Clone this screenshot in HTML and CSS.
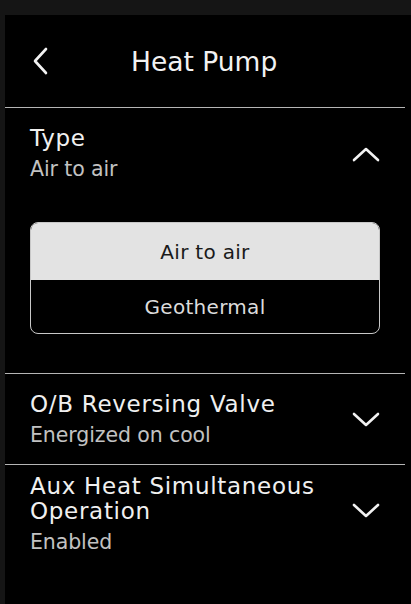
FILE: index.html
```html
<!DOCTYPE html>
<html>
<head>
<meta charset="utf-8">
<link rel="stylesheet" href="styles.css">
</head>
<body>
<div class="screen">
  <header class="header">
    <svg class="back" width="16" height="28" viewBox="0 0 16 28"><path d="M14 2 L3 14 L14 26" fill="none" stroke="#f2f2f2" stroke-width="2.6" stroke-linecap="round" stroke-linejoin="round"/></svg>
    <h1 class="title">Heat Pump</h1>
  </header>
  <div class="divider"></div>
  <section class="item item-open">
    <div class="row">
      <div class="texts">
        <div class="label">Type</div>
        <div class="value">Air to air</div>
      </div>
      <svg class="chev" width="28" height="16" viewBox="0 0 28 16"><path d="M2 14 L14 3 L26 14" fill="none" stroke="#f2f2f2" stroke-width="2.6" stroke-linecap="round" stroke-linejoin="round"/></svg>
    </div>
    <div class="options">
      <div class="option selected">Air to air</div>
      <div class="option">Geothermal</div>
    </div>
  </section>
  <div class="divider"></div>
  <section class="item item-ob">
    <div class="row">
      <div class="texts">
        <div class="label">O/B Reversing Valve</div>
        <div class="value">Energized on cool</div>
      </div>
      <svg class="chev" width="28" height="16" viewBox="0 0 28 16"><path d="M2 2 L14 13 L26 2" fill="none" stroke="#f2f2f2" stroke-width="2.6" stroke-linecap="round" stroke-linejoin="round"/></svg>
    </div>
  </section>
  <div class="divider"></div>
  <section class="item item-aux">
    <div class="row">
      <div class="texts">
        <div class="label">Aux Heat Simultaneous<br>Operation</div>
        <div class="value">Enabled</div>
      </div>
      <svg class="chev" width="28" height="16" viewBox="0 0 28 16"><path d="M2 2 L14 13 L26 2" fill="none" stroke="#f2f2f2" stroke-width="2.6" stroke-linecap="round" stroke-linejoin="round"/></svg>
    </div>
  </section>
</div>
</body>
</html>
```
FILE: styles.css
```css
html, body {
  margin: 0;
  padding: 0;
  background: #151515;
}
body {
  width: 411px;
  height: 604px;
  overflow: hidden;
  font-family: "DejaVu Sans", "Noto Sans", sans-serif;
}
.screen {
  margin: 15px 0 0 5px;
  height: 589px;
  background: #000;
  color: #f0f0f0;
}
.header {
  height: 92px;
  display: flex;
  align-items: center;
  padding-left: 27px;
}
.back {
  display: block;
}
.title {
  margin: 0 0 0 83px;
  font-size: 26.5px;
  font-weight: 400;
  color: #f2f2f2;
  letter-spacing: 0;
}
.divider {
  height: 1px;
  background: #b5b5b5;
  margin-right: 6px;
}
.item {
  padding: 0 0 0 25px;
}
.row {
  display: flex;
  align-items: center;
  justify-content: space-between;
  padding-right: 31px;
}
.label {
  font-size: 23px;
  line-height: 25px;
  color: #f0f0f0;
  letter-spacing: 0.7px;
}
.value {
  margin-top: 5px;
  font-size: 20.5px;
  line-height: 26px;
  color: #c2c2c2;
  letter-spacing: -0.1px;
}
.chev {
  display: block;
}
.item-open .row {
  padding-top: 18px;
}
.options {
  margin: 40px 31px 39px 0;
  border: 1px solid #c8c8c8;
  border-radius: 8px;
  overflow: hidden;
}
.option {
  height: 53px;
  display: flex;
  align-items: center;
  justify-content: center;
  font-size: 20px;
  color: #dcdcdc;
  letter-spacing: 0.3px;
}
.option.selected {
  background: #e3e3e3;
  color: #1a1a1a;
  height: 57px;
}
.item-ob .row {
  padding-top: 18px;
  padding-bottom: 16px;
}
.item-aux .row {
  padding-top: 9px;
}
.item-aux .chev {
  margin-top: -8px;
}
```
